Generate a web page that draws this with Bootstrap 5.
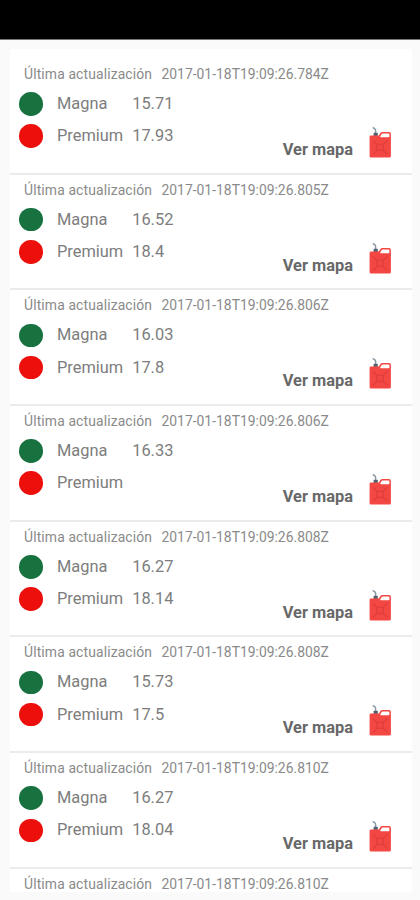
<!DOCTYPE html>
<html lang="es">
<head>
<meta charset="utf-8">
<meta name="viewport" content="width=device-width, initial-scale=1">
<title>Gasolineras</title>
<link href="https://cdn.jsdelivr.net/npm/bootstrap@5.3.0/dist/css/bootstrap.min.css" rel="stylesheet">
<style>
  body { font-family: Roboto, sans-serif; background: #fafafa; color: #7d7d7d; height: 900px; }
  .status-strip { height: 40px; background: #000; border-bottom: 1px solid #777; }
  .stations { margin: 9px 8px 0 10px; padding-top: 9.9px; height: 843px; background: #fff; }
  .station { height: 115.7px; border-bottom: 2px solid #ebebeb; padding: 5px 21px 0 9px; }
  .updated { font-size: 13.9px; line-height: 20px; padding-left: 5px; gap: 9px; color: #8a8a8a; }
  .updated .caption-text { width: 128.5px; letter-spacing: .13px; }
  .prices { padding: 4px 0 6.6px; }
  .fuel { height: 32.2px; font-size: 16.4px; line-height: 32px; }
  .dot { width: 23.6px; height: 23.6px; margin-right: 14.4px; }
  .dot-magna { background: #177240; }
  .dot-premium { background: #ec0f0b; }
  .fuel-name { width: 75.2px; }
  .map-link { font-size: 16.4px; font-weight: 700; line-height: 19px; color: #686868; margin-right: 15.5px; }
  .can { width: 22.5px; height: 33px; }
</style>
</head>
<body class="overflow-hidden">
<div class="status-strip"></div>
<main class="stations overflow-hidden" id="stations"></main>
<template id="station-row">
  <article class="station">
    <div class="updated d-flex text-nowrap"><span class="caption-text">Última actualización</span><time></time></div>
    <div class="details d-flex justify-content-between">
      <div class="prices">
        <div class="fuel d-flex align-items-center"><span class="dot dot-magna rounded-circle"></span><span class="fuel-name">Magna</span><span class="magna"></span></div>
        <div class="fuel d-flex align-items-center"><span class="dot dot-premium rounded-circle"></span><span class="fuel-name">Premium</span><span class="premium"></span></div>
      </div>
      <div class="d-flex align-items-end">
        <a class="map-link text-decoration-none" href="#">Ver mapa</a>
        <svg class="can" viewBox="0 0 22.5 33" aria-hidden="true">
          <path d="M6.6 8V4.6Q6.6 3.2 5.4 2.5L3.8 1.4" fill="none" stroke="#8b98a3" stroke-width="1.5"/>
          <path d="M4.6 6.8h4.2V10H4.6z" fill="#526170"/>
          <path fill-rule="evenodd" d="M2 9.4H9.8L11.6 6.8Q12.2 6.1 13.2 6.1H20.1Q21.9 6.1 21.9 7.9V30Q21.9 31.6 20.4 31.6H2Q.6 31.6 .6 30.2V10.8Q.6 9.4 2 9.4ZM13.6 7.6Q12.9 7.6 12.4 8.4L11.2 10.6Q11.1 11.3 11.8 11.3H19.6Q20.4 11.3 20.4 10.5V8.4Q20.4 7.6 19.6 7.6Z" fill="#f34743"/>
          <path d="M4 14.3l4 4M18.3 14.3l-4 4M4 28.3l4-4M18.3 28.3l-4-4M8 18.3h6.3v6H8z" fill="none" stroke="#dd3d3a" stroke-width="1.1"/>
        </svg>
      </div>
    </div>
  </article>
</template>
<script src="https://cdn.jsdelivr.net/npm/bootstrap@5.3.0/dist/js/bootstrap.bundle.min.js"></script>
<script>
  const stations = [
    ['784', '15.71', '17.93'],
    ['805', '16.52', '18.4'],
    ['806', '16.03', '17.8'],
    ['806', '16.33', ''],
    ['808', '16.27', '18.14'],
    ['808', '15.73', '17.5'],
    ['810', '16.27', '18.04'],
    ['810']
  ];
  const list = document.getElementById('stations');
  const template = document.getElementById('station-row');
  for (const [ms, magna, premium] of stations) {
    const row = template.content.cloneNode(true);
    row.querySelector('time').textContent = `2017-01-18T19:09:26.${ms}Z`;
    if (magna === undefined) {
      row.querySelector('.details').remove();
    } else {
      row.querySelector('.magna').textContent = magna;
      row.querySelector('.premium').textContent = premium;
    }
    list.append(row);
  }
</script>
</body>
</html>
